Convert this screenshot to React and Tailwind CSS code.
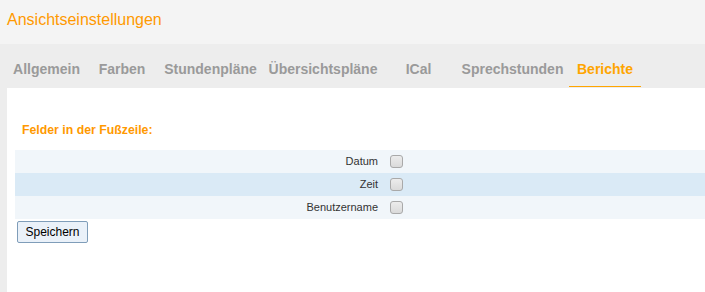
import React from "react";

const tabs = [
  { label: "Allgemein", w: "w-[83px]" },
  { label: "Farben", w: "w-[68px]" },
  { label: "Stundenpläne", w: "w-[109px]" },
  { label: "Übersichtspläne", w: "w-[116px]" },
  { label: "ICal", w: "w-[75px]" },
  { label: "Sprechstunden", w: "w-[113px]" },
];

function Box() {
  return (
    <div className="ml-[12px] h-[13px] w-[13px] rounded-[3px] border border-[#a9a9a9] bg-gradient-to-b from-[#ececec] to-[#dadada]" />
  );
}

function Row({ label, bg }) {
  return (
    <div className={`flex h-[23px] items-center ${bg}`}>
      <div className="w-[363px] text-right text-[11px] leading-[23px] text-[#333]">{label}</div>
      <Box />
    </div>
  );
}

export default function App() {
  return (
    <div className="h-[292px] w-[705px] overflow-hidden bg-white font-['Liberation_Sans',Arial,sans-serif]">
      <div className="h-[44px] bg-[#f4f4f4] pl-[7px] pt-[11px] text-[16px] leading-[18px] text-[#ff9900]">
        Ansichtseinstellungen
      </div>
      <div className="flex h-[44px] bg-[#ededed] pl-[5px]">
        {tabs.map((t) => (
          <div
            key={t.label}
            className={`${t.w} whitespace-nowrap pt-[17px] text-center text-[14px] font-bold leading-[16px] text-[#9a9a9a]`}
          >
            {t.label}
          </div>
        ))}
        <div className="flex w-[72px] flex-col">
          <div className="whitespace-nowrap pt-[17px] text-center text-[14px] font-bold leading-[16px] text-[#ffa500]">
            Berichte
          </div>
          <div className="mt-auto mb-[1px] h-[1px] bg-[#ffa500]" />
        </div>
      </div>
      <div className="flex h-[204px] bg-[#ededed] pl-[7px]">
        <div className="flex-1 bg-white">
          <div className="pl-[15px] pt-[35px] text-[12.3px] font-bold leading-[14px] text-[#ff9900]">
            Felder in der Fußzeile:
          </div>
          <div className="ml-[8px] mt-[13px]">
            <Row label="Datum" bg="bg-[#f1f6fa]" />
            <Row label="Zeit" bg="bg-[#daeaf6]" />
            <Row label="Benutzername" bg="bg-[#f1f6fa]" />
          </div>
          <button className="ml-[10px] mt-[2px] h-[22px] w-[71px] rounded-[2px] border border-[#7f9db9] bg-[#eaf1f9] text-[12px] leading-[20px] text-black">
            Speichern
          </button>
        </div>
      </div>
    </div>
  );
}
